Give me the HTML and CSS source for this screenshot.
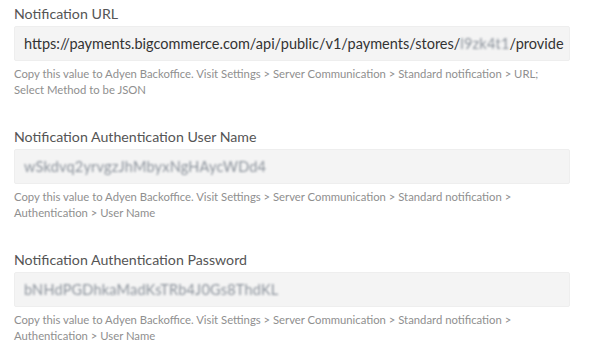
FILE: index.html
```html
<!DOCTYPE html>
<html lang="en">
<head>
  <meta charset="UTF-8" />
  <title>Adyen Settings</title>
  <link rel="stylesheet" href="styles.css">
</head>
<body>
  <div class="settings">
    <div class="field">
      <label class="field-label">Notification URL</label>
      <div class="field-input">https://payments.bigcommerce.com/api/public/v1/payments/stores/<span class="masked">l9zk4t1</span>/provide</div>
      <p class="field-help">Copy this value to Adyen Backoffice. Visit Settings &gt; Server Communication &gt; Standard notification &gt; URL; Select Method to be JSON</p>
    </div>

    <div class="field">
      <label class="field-label">Notification Authentication User Name</label>
      <div class="field-input"><span class="masked">wSkdvq2yrvgzJhMbyxNgHAycWDd4</span></div>
      <p class="field-help">Copy this value to Adyen Backoffice. Visit Settings &gt; Server Communication &gt; Standard notification &gt; Authentication &gt; User Name</p>
    </div>

    <div class="field">
      <label class="field-label">Notification Authentication Password</label>
      <div class="field-input"><span class="masked">bNHdPGDhkaMadKsTRb4J0Gs8ThdKL</span></div>
      <p class="field-help">Copy this value to Adyen Backoffice. Visit Settings &gt; Server Communication &gt; Standard notification &gt; Authentication &gt; User Name</p>
    </div>
  </div>
</body>
</html>
```

FILE: styles.css
```css
* {
  margin: 0;
  padding: 0;
  box-sizing: border-box;
  font-family: 'Lato', 'Open Sans', sans-serif;
}

body {
  background: #FFFFFF;
  color: #333333;
}

.settings {
  width: 556px;
  margin-left: 14px;
  padding-top: 4px;
  display: flex;
  flex-direction: column;
  gap: 29px;
}

.field-label {
  display: block;
  font-size: 14.2px;
  line-height: 20px;
  color: #555555;
  margin-bottom: 2px;
}

.field-input {
  height: 35px;
  background: #F4F4F4;
  border: 1px solid #EEEEEE;
  border-radius: 2px;
  padding: 0 9px;
  font-size: 14.5px;
  line-height: 33px;
  color: #333333;
  white-space: nowrap;
  overflow: hidden;
}

.masked {
  color: #8C939C;
  letter-spacing: 0.2px;
  filter: blur(1.1px);
}

.field-help {
  margin-top: 5px;
  font-size: 11.3px;
  line-height: 16px;
  color: #8F8F8F;
}
```
